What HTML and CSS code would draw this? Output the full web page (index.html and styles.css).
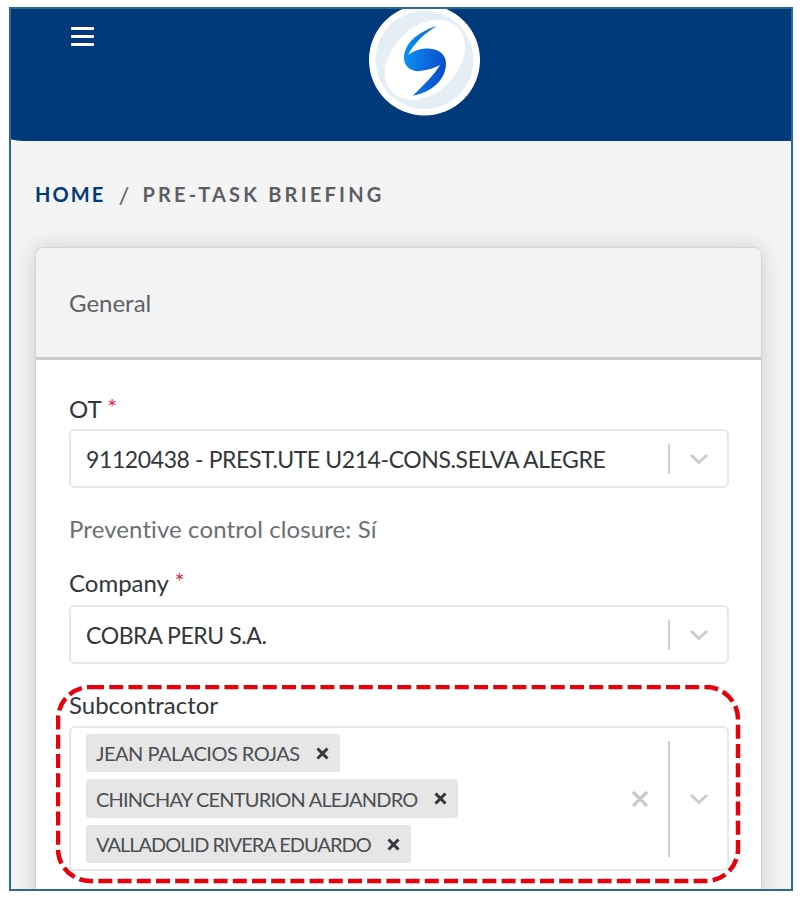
FILE: index.html
```html
<!DOCTYPE html>
<html lang="en">
<head>
	<meta charset="UTF-8">
	<meta name="viewport" content="width=device-width, initial-scale=1.0">
	<title>Pre-task briefing</title>
	<link rel="stylesheet" href="styles.css">
</head>
<body>

	<div class="frame">

		<!-- Header -->
		<div class="topbar">
			<div class="menu-btn"><span></span><span></span><span></span></div>
			<svg class="logo" width="114" height="114" viewBox="367 3 114 114">
				<defs>
					<linearGradient id="logo-blue" x1="0" y1="0" x2="1" y2="0.25">
						<stop offset="0" stop-color="#0a9af5"/>
						<stop offset="1" stop-color="#0a4fd0"/>
					</linearGradient>
				</defs>
				<circle cx="424.500" cy="60" r="55.500" fill="#fff"/>
				<circle cx="424.500" cy="60" r="49" fill="#e6eef5"/>
				<ellipse cx="425" cy="60" rx="46" ry="33" fill="#fff" transform="rotate(-45 425 60)"/>
				<path fill="url(#logo-blue)" d="M436.700 26C415 33 404 45 404 58C404 68 413 72 420 71C428 70 435 68 440 65C434 75 423 86 412.700 95.700C432 92 446 80 446 63C446 52 434 48 426 48.500C418 49 412 52 408 55C415 42 425 33 436.700 26Z"/>
			</svg>
		</div>

		<!-- Breadcrumb -->
		<div class="breadcrumb">
			<a class="crumb-home">HOME</a>
			<span class="crumb-sep">/</span>
			<span class="crumb-current">PRE-TASK BRIEFING</span>
		</div>

		<!-- General card -->
		<div class="card">
			<div class="card-header">General</div>
			<div class="card-body">

				<label class="field-label">OT <span class="required">*</span></label>
				<div class="select-box">
					<div class="select-value">91120438 - PREST.UTE U214-CONS.SELVA ALEGRE</div>
					<div class="select-sep"></div>
					<div class="select-arrow">
						<svg width="20" height="12" viewBox="0 0 20 12"><path d="M2 2l8 7.500 8-7.500" fill="none" stroke="#ccc" stroke-width="3"/></svg>
					</div>
				</div>
				<p class="field-note">Preventive control closure: Sí</p>

				<label class="field-label label-company">Company <span class="required">*</span></label>
				<div class="select-box">
					<div class="select-value">COBRA PERU S.A.</div>
					<div class="select-sep"></div>
					<div class="select-arrow">
						<svg width="20" height="12" viewBox="0 0 20 12"><path d="M2 2l8 7.500 8-7.500" fill="none" stroke="#ccc" stroke-width="3"/></svg>
					</div>
				</div>

				<label class="field-label label-sub">Subcontractor</label>
				<div class="select-box multi">
					<div class="chip-list">
						<div class="chip chip-wide">JEAN PALACIOS ROJAS
							<svg width="13" height="13" viewBox="0 0 13 13"><path d="M1.500 1.500l10 10m0-10l-10 10" stroke="#33363a" stroke-width="3"/></svg>
						</div>
						<div class="chip chip-mid">CHINCHAY CENTURION ALEJANDRO
							<svg width="13" height="13" viewBox="0 0 13 13"><path d="M1.500 1.500l10 10m0-10l-10 10" stroke="#33363a" stroke-width="3"/></svg>
						</div>
						<div class="chip chip-tight">VALLADOLID RIVERA EDUARDO
							<svg width="13" height="13" viewBox="0 0 13 13"><path d="M1.500 1.500l10 10m0-10l-10 10" stroke="#33363a" stroke-width="3"/></svg>
						</div>
					</div>
					<div class="select-clear">
						<svg width="18" height="18" viewBox="0 0 18 18"><path d="M2 2l14 14m0-14l-14 14" stroke="#ccc" stroke-width="3.500"/></svg>
					</div>
					<div class="select-sep"></div>
					<div class="select-arrow">
						<svg width="20" height="12" viewBox="0 0 20 12"><path d="M2 2l8 7.500 8-7.500" fill="none" stroke="#ccc" stroke-width="3"/></svg>
					</div>
				</div>

			</div>
		</div>

		<!-- Red highlight drawn over the screenshot -->
		<svg class="highlight" width="686" height="200" viewBox="0 0 686 200">
			<rect x="2" y="2" width="680" height="194" rx="32" ry="32" fill="none" stroke="#e8000b" stroke-width="4.500" stroke-dasharray="14 5.200"/>
		</svg>

	</div>

</body>
</html>
```

FILE: styles.css
```css
html, body {
	margin: 0;
	padding: 0;
	background-color: #fff;
}
body {
	font-family: Lato, "Noto Sans", sans-serif;
	height: 898px;
	overflow: hidden;
}
.frame {
	position: relative;
	box-sizing: border-box;
	width: 784px;
	height: 884px;
	margin: 7px 0 0 9px;
	border: 2px solid #2a6a90;
	background-color: #f4f4f4;
	overflow: hidden;
}

/* Header */
.topbar {
	position: relative;
	height: 132px;
	background-color: #003a7a;
	border-bottom-left-radius: 20px 2px;
}
.menu-btn {
	position: absolute;
	left: 60px;
	top: 18px;
	width: 23px;
	display: flex;
	flex-direction: column;
	gap: 5px;
}
.menu-btn span {
	display: block;
	height: 3px;
	background-color: #fff;
	border-radius: 1px;
}
.logo {
	position: absolute;
	left: 356px;
	top: -6px;
}

/* Breadcrumb */
.breadcrumb {
	display: flex;
	align-items: center;
	height: 24px;
	margin: 41px 0 41px 24px;
	font-size: 20px;
	font-weight: 700;
	letter-spacing: 3.200px;
}
.crumb-home {
	color: #003a7a;
	letter-spacing: 2.100px;
}
.crumb-sep {
	margin: 0 10px 0 13px;
	color: #5c5f63;
	font-size: 24px;
	font-weight: 400;
}
.crumb-current {
	color: #5c5f63;
}

/* Card */
.card {
	box-sizing: border-box;
	width: 727px;
	margin-left: 24px;
	border: 1px solid #d4d4d4;
	border-radius: 9px 9px 0 0;
	background-color: #fff;
	box-shadow: 0 0 22px rgba(0,0,0,0.16);
}
.card-header {
	box-sizing: border-box;
	height: 112px;
	padding: 40px 33px 0;
	background-color: #f3f3f3;
	border-bottom: 3px solid #ccc;
	border-radius: 9px 9px 0 0;
	font-size: 24px;
	line-height: 30px;
	color: #5f6266;
}
.card-body {
	padding: 31px 32px 40px 33px;
	color: #33363a;
}

/* Form fields */
.field-label {
	display: block;
	height: 38px;
	font-size: 24px;
	line-height: 32px;
	color: #33363a;
}
.label-company {
	height: 40px;
	margin-top: 21px;
}
.label-sub {
	height: 37px;
	margin-top: 25px;
}
.required {
	color: #e0324a;
	font-size: 24px;
	vertical-align: 2px;
}
.select-box {
	box-sizing: border-box;
	display: flex;
	align-items: center;
	width: 660px;
	height: 59px;
	border: 2px solid #e4e7ec;
	border-radius: 6px;
	background-color: #fff;
}
.select-value {
	flex: 1;
	padding-left: 15px;
	font-size: 23px;
	letter-spacing: -0.400px;
	color: #33363a;
	white-space: nowrap;
}
.select-sep {
	width: 2px;
	height: 30px;
	background-color: #d0d0d0;
}
.select-arrow {
	display: flex;
	justify-content: center;
	width: 57px;
}
.field-note {
	height: 30px;
	margin: 26px 0 0;
	font-size: 24px;
	line-height: 30px;
	letter-spacing: 0.100px;
	color: #6c6f73;
}

/* Multi select */
.select-box.multi {
	height: 145px;
}
.select-box.multi .select-sep {
	height: 116px;
}
.chip-list {
	flex: 1;
	display: flex;
	flex-direction: column;
	align-items: flex-start;
	gap: 7px;
	padding-left: 15px;
}
.chip {
	display: flex;
	align-items: center;
	gap: 16px;
	height: 38.500px;
	padding: 0 11px 0 10px;
	border-radius: 3px;
	background-color: #e6e6e6;
	font-size: 20px;
	color: #4b4e52;
	white-space: nowrap;
}
.chip-wide {
	letter-spacing: -0.500px;
}
.chip-mid {
	letter-spacing: -0.790px;
}
.chip-tight {
	letter-spacing: -1px;
}
.select-clear {
	display: flex;
	margin-right: 19px;
}

/* Highlight */
.highlight {
	position: absolute;
	left: 45px;
	top: 676px;
}
```
